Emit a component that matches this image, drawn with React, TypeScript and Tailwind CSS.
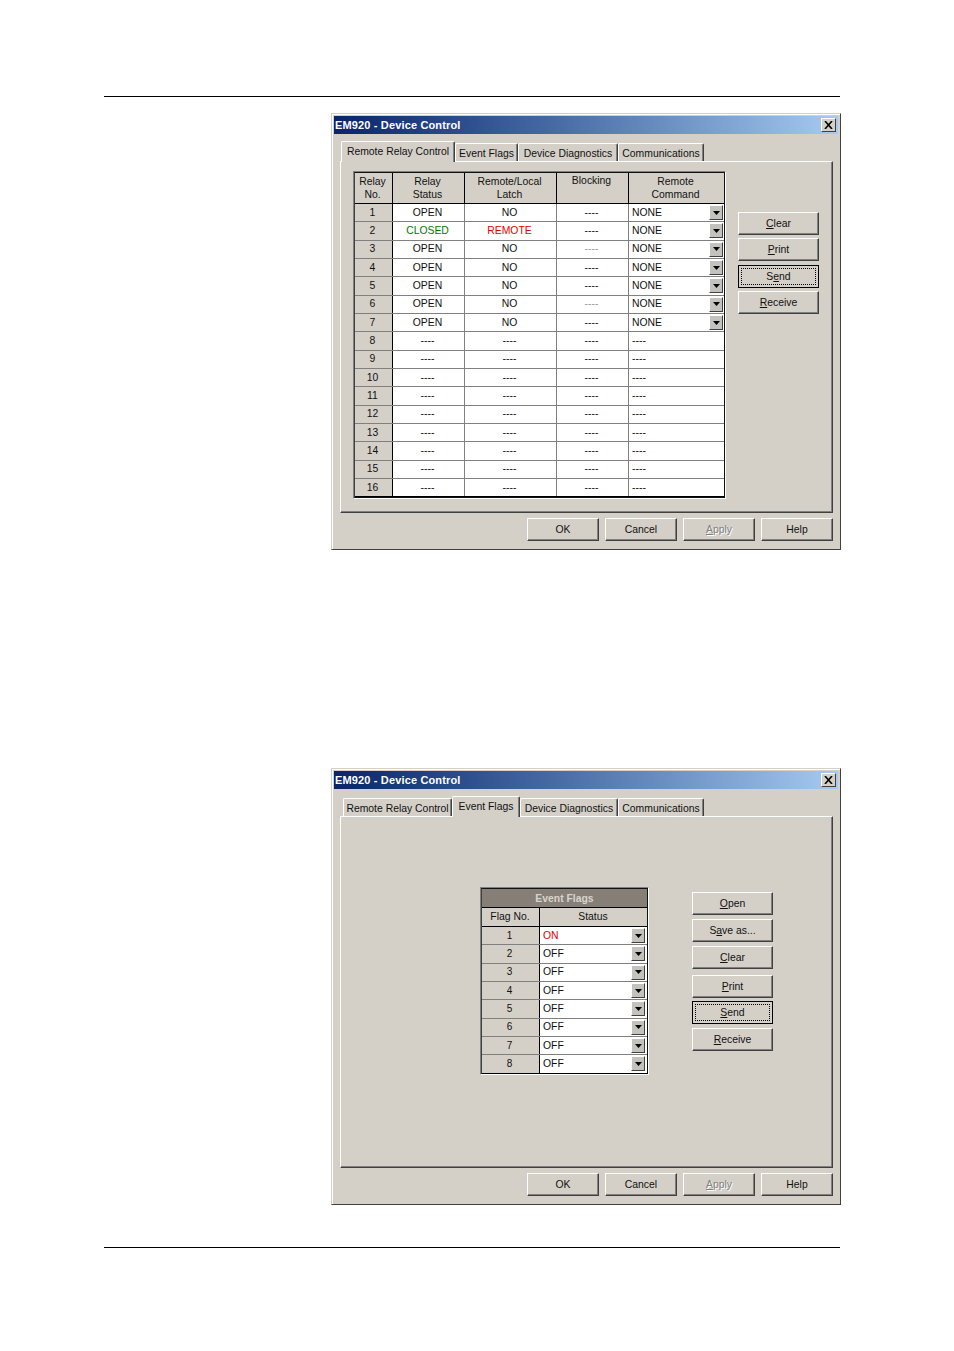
import type { ReactNode } from "react";

const relayRows = [
  { no: 1, status: "OPEN", latch: "NO", blocking: "----", command: "NONE" },
  { no: 2, status: "CLOSED", latch: "REMOTE", blocking: "----", command: "NONE" },
  { no: 3, status: "OPEN", latch: "NO", blocking: "----", dim: true, command: "NONE" },
  { no: 4, status: "OPEN", latch: "NO", blocking: "----", command: "NONE" },
  { no: 5, status: "OPEN", latch: "NO", blocking: "----", command: "NONE" },
  { no: 6, status: "OPEN", latch: "NO", blocking: "----", dim: true, command: "NONE" },
  { no: 7, status: "OPEN", latch: "NO", blocking: "----", command: "NONE" },
  ...[8, 9, 10, 11, 12, 13, 14, 15, 16].map((no) => ({
    no,
    status: "----",
    latch: "----",
    blocking: "----",
    command: "",
  })),
];

const flagRows = ["ON", "OFF", "OFF", "OFF", "OFF", "OFF", "OFF", "OFF"];

function ComboArrow() {
  return (
    <span className="flex h-[15px] w-[14px] shrink-0 items-center justify-center border-t border-l border-t-white border-l-white border-r border-b border-r-[#404040] border-b-[#404040] bg-[#c4c2bd]">
      <svg width="7" height="4" viewBox="0 0 7 4">
        <polygon points="0,0 7,0 3.5,4" fill="#000" />
      </svg>
    </span>
  );
}

function PushButton({
  children,
  focused,
  className = "",
}: {
  children: ReactNode;
  focused?: boolean;
  className?: string;
}) {
  if (focused) {
    return (
      <div className={`h-[23px] w-[81px] border border-black bg-[#d4d0c8] p-[2px] ${className}`}>
        <div className="flex h-full items-center justify-center border border-dotted border-black text-[#111]">
          {children}
        </div>
      </div>
    );
  }
  return (
    <div
      className={`flex h-[23px] w-[81px] items-center justify-center border-t border-l border-t-white border-l-white border-r border-b border-r-[#404040] border-b-[#404040] bg-[#d4d0c8] shadow-[inset_-1px_-1px_0_#808080] ${className}`}
    >
      {children}
    </div>
  );
}

function FooterButton({ label, disabled }: { label: ReactNode; disabled?: boolean }) {
  return (
    <div
      className={`flex h-[23px] w-[72px] items-center justify-center border-t border-l border-t-white border-l-white border-r border-b border-r-[#404040] border-b-[#404040] shadow-[inset_-1px_-1px_0_#808080] ${
        disabled ? "text-[#808080] [text-shadow:1px_1px_0_#fff]" : ""
      }`}
    >
      {label}
    </div>
  );
}

function Tab({
  label,
  active,
  className,
}: {
  label: string;
  active?: boolean;
  className: string;
}) {
  if (active) {
    return (
      <div
        className={`relative z-10 -mb-px flex h-[21px] items-center justify-center rounded-t-[2px] border-t border-l border-t-white border-l-white border-r border-r-[#404040] bg-[#d4d0c8] whitespace-nowrap shadow-[inset_-1px_0_0_#808080] ${className}`}
      >
        {label}
      </div>
    );
  }
  return (
    <div
      className={`flex h-[18px] items-center justify-center rounded-t-[2px] border-t border-l border-t-white border-l-white border-r border-r-[#404040] pt-[3px] whitespace-nowrap shadow-[inset_-1px_0_0_#808080] ${className}`}
    >
      {label}
    </div>
  );
}

function Dialog({ tab, children }: { tab: "relay" | "flags"; children: ReactNode }) {
  const relay = tab === "relay";
  return (
    <div className="ml-[331px] h-[437px] w-[510px] border border-t-[#d4d0c8] border-l-[#d4d0c8] border-r-[#404040] border-b-[#404040] bg-[#d4d0c8] p-[2px] text-[10.4px] leading-[12px] text-[#111] shadow-[inset_1px_1px_0_#fff]">
      <div className="flex h-[18px] items-center justify-between bg-gradient-to-r from-[#0a246a] to-[#a6caf0] pr-[2px] pl-[1px]">
        <span className="text-[11px] font-bold tracking-[0.15px] text-white">EM920 - Device Control</span>
        <span className="flex h-[14px] w-[15px] items-center justify-center border-t border-l border-t-white border-l-white border-r border-b border-r-[#404040] border-b-[#404040] bg-[#d4d0c8]">
          <svg width="9" height="8" viewBox="0 0 9 8">
            <path d="M1 0 L8 8 M8 0 L1 8" stroke="#000" strokeWidth="1.6" />
          </svg>
        </span>
      </div>
      <div className="mt-[7px] ml-[6px] w-[493px]">
        <div className={`flex h-[20px] items-end ${relay ? "pl-px" : "pl-[3px]"}`}>
          <Tab label="Remote Relay Control" active={relay} className={relay ? "w-[114px]" : "w-[109px]"} />
          <Tab label="Event Flags" active={!relay} className={relay ? "w-[63px]" : "w-[68px]"} />
          <Tab label="Device Diagnostics" className={relay ? "w-[100px]" : "w-[98px]"} />
          <Tab label="Communications" className="w-[86px]" />
        </div>
        <div className="relative flex h-[352px] border-t border-l border-t-white border-l-white border-r border-b border-r-[#404040] border-b-[#404040] shadow-[inset_-1px_-1px_0_#808080]">
          {children}
        </div>
        <div className="mt-[5px] flex justify-end gap-[6px]">
          <FooterButton label="OK" />
          <FooterButton label="Cancel" />
          <FooterButton disabled label={<><u>A</u>pply</>} />
          <FooterButton label="Help" />
        </div>
      </div>
    </div>
  );
}

function RelayPanel() {
  const head = "flex flex-col items-center justify-center gap-px border-r border-black h-full pr-[2px]";
  return (
    <div className="flex pt-[9px] pl-[12px]">
      <div className="h-[328px] w-[373px] border border-t-[#808080] border-l-[#808080] border-r-white border-b-white">
        <div className="h-full border border-[#111] border-l-[#404040] bg-white">
          <div className="flex h-[31px] border-b border-black bg-[#d4d0c8]">
            <div className={`${head} w-[38px]`}><span>Relay</span><span>No.</span></div>
            <div className={`${head} w-[72px]`}><span>Relay</span><span>Status</span></div>
            <div className={`${head} w-[92px]`}><span>Remote/Local</span><span>Latch</span></div>
            <div className={`${head} w-[72px] justify-start pt-[2px]`}><span>Blocking</span></div>
            <div className="flex h-full flex-1 flex-col items-center justify-center gap-px pr-[2px]"><span>Remote</span><span>Command</span></div>
          </div>
          {relayRows.map((row, i) => (
            <div
              key={row.no}
              className={`flex h-[18.33px] items-stretch border-b ${i === 15 ? "border-black" : "border-[#808080]"}`}
            >
              <div className="flex w-[38px] items-center justify-center border-r border-black bg-[#d4d0c8] pr-[2px]">{row.no}</div>
              <div
                className={`flex w-[72px] items-center justify-center border-r border-[#808080] pr-[2px] ${
                  row.status === "CLOSED" ? "text-[#007a00]" : ""
                }`}
              >
                {row.status}
              </div>
              <div
                className={`flex w-[92px] items-center justify-center border-r border-[#808080] pr-[2px] ${
                  row.latch === "REMOTE" ? "text-[#e00000]" : ""
                }`}
              >
                {row.latch}
              </div>
              <div
                className={`flex w-[72px] items-center justify-center border-r border-[#808080] pr-[2px] ${
                  row.dim ? "text-[#999]" : ""
                }`}
              >
                {row.blocking}
              </div>
              <div className="flex flex-1 items-center justify-between pr-[1px] pl-[3px]">
                <span>{row.command || "----"}</span>
                {row.command && <ComboArrow />}
              </div>
            </div>
          ))}
        </div>
      </div>
      <div className="mt-[41px] ml-[12px] flex flex-col">
        <PushButton><span><u>C</u>lear</span></PushButton>
        <PushButton className="mt-[3px]"><span><u>P</u>rint</span></PushButton>
        <PushButton focused className="mt-[4px]"><span>S<u>e</u>nd</span></PushButton>
        <PushButton className="mt-[3px]"><span><u>R</u>eceive</span></PushButton>
      </div>
    </div>
  );
}

function FlagsPanel() {
  return (
    <div className="flex pt-[70px] pl-[139px]">
      <div className="h-[188px] w-[169px] border border-t-[#808080] border-l-[#808080] border-r-white border-b-white">
        <div className="h-full border border-[#111] border-l-[#404040] bg-white">
          <div className="flex h-[19px] items-center justify-center border-b border-black bg-[#857f78] pt-[2px] font-bold text-[#d8d4cc]">
            Event Flags
          </div>
          <div className="flex h-[19px] border-b border-black bg-[#d4d0c8]">
            <div className="flex w-[58px] items-center justify-center border-r border-black pr-[1px]">Flag No.</div>
            <div className="flex flex-1 items-center justify-center pr-[1px]">Status</div>
          </div>
          {flagRows.map((flag, i) => (
            <div
              key={i}
              className={`flex h-[18.33px] border-b ${i === 7 ? "border-black" : "border-[#808080]"}`}
            >
              <div className="flex w-[58px] items-center justify-center border-r border-black bg-[#d4d0c8] pr-[2px] text-[10px]">
                {i + 1}
              </div>
              <div className="flex flex-1 items-center justify-between pr-[2px] pl-[3px]">
                <span className={flag === "ON" ? "text-[#e00000]" : ""}>{flag}</span>
                <ComboArrow />
              </div>
            </div>
          ))}
        </div>
      </div>
      <div className="mt-[5px] ml-[43px] flex flex-col">
        <PushButton><span><u>O</u>pen</span></PushButton>
        <PushButton className="mt-[4px]"><span>S<u>a</u>ve as...</span></PushButton>
        <PushButton className="mt-[4px]"><span><u>C</u>lear</span></PushButton>
        <PushButton className="mt-[6px]"><span><u>P</u>rint</span></PushButton>
        <PushButton focused className="mt-[3px]"><span><u>S</u>end</span></PushButton>
        <PushButton className="mt-[4px]"><span><u>R</u>eceive</span></PushButton>
      </div>
    </div>
  );
}

export default function App() {
  return (
    <div className="h-[1351px] w-[954px] overflow-hidden bg-white pt-[96px] font-['Liberation_Sans',Arial,sans-serif]">
      <div className="ml-[104px] h-px w-[736px] bg-black" />
      <div className="mt-[16px]">
        <Dialog tab="relay">
          <RelayPanel />
        </Dialog>
      </div>
      <div className="mt-[218px]">
        <Dialog tab="flags">
          <FlagsPanel />
        </Dialog>
      </div>
      <div className="mt-[42px] ml-[104px] h-px w-[736px] bg-black" />
    </div>
  );
}
